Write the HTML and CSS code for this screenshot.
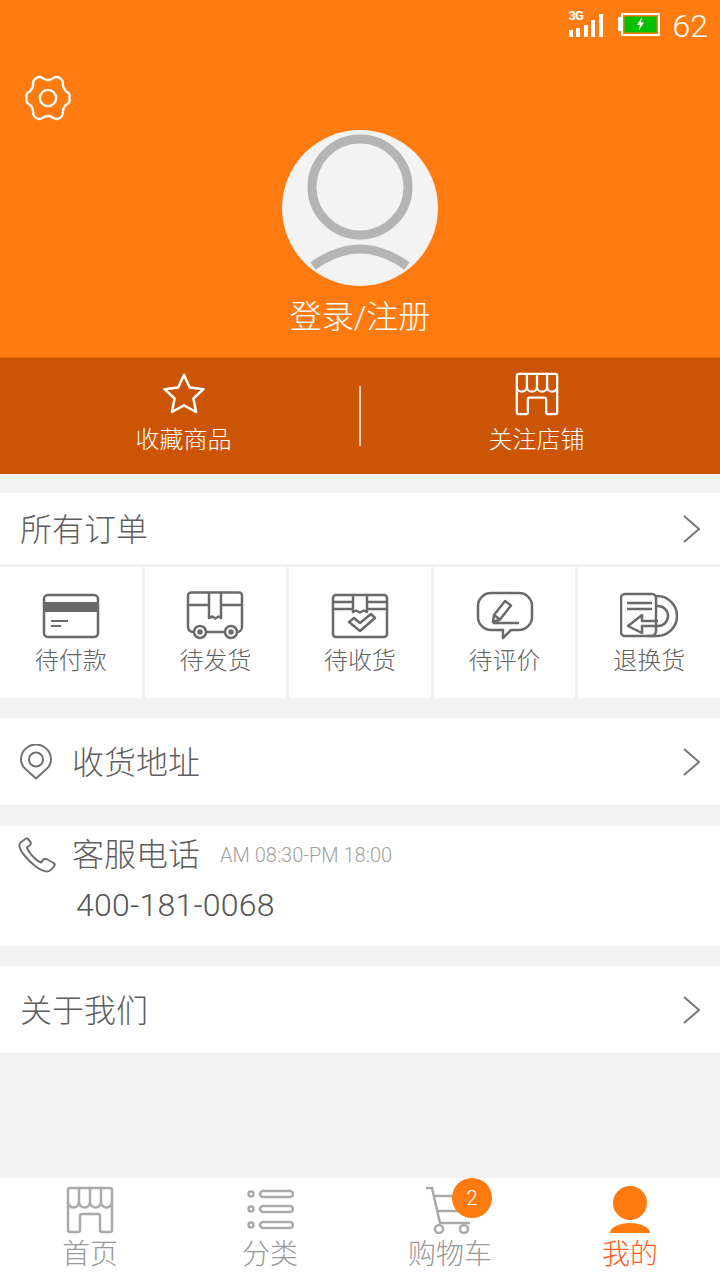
FILE: index.html
```html
<!DOCTYPE html>
<html lang="zh-CN">
<head>
  <meta charset="UTF-8" />
  <meta name="viewport" content="width=device-width, initial-scale=1.0"/>
  <title>我的</title>
  <link rel="stylesheet" href="styles.css">
</head>
<body>
  <svg class="defs" width="0" height="0">
    <symbol id="shop" viewBox="0 0 48 48">
      <path d="M4 2h40a2 2 0 0 1 2 2v40a2 2 0 0 1-2 2H36a2 2 0 0 1-2-2V30a2 2 0 0 0-2-2H16a2 2 0 0 0-2 2v14a2 2 0 0 1-2 2H4a2 2 0 0 1-2-2V4a2 2 0 0 1 2-2z"/>
      <path d="M2 16a5.500 5.500 0 0 0 11 0a5.500 5.500 0 0 0 11 0a5.500 5.500 0 0 0 11 0a5.500 5.500 0 0 0 11 0M13 3v13M24 3v13M35 3v13"/>
    </symbol>
    <symbol id="chevron" viewBox="0 0 18 30">
      <path d="M2 2l15 13L2 28"/>
    </symbol>
  </svg>

  <header class="profile">
    <div class="status">
      <span class="signal">
        <span class="net">3G</span>
        <svg width="36" height="28" viewBox="0 0 36 28"><path d="M2 20v7M9 18v9M17 15v12M24 10v17M32 4v23" stroke="#fff" stroke-width="4"/></svg>
      </span>
      <svg class="battery" width="42" height="26" viewBox="0 0 42 26">
        <rect x="0" y="6" width="4" height="14" rx="1" fill="#fff"/>
        <rect x="4" y="3" width="37" height="21" fill="none" stroke="#fff" stroke-width="2"/>
        <rect x="6.500" y="5.500" width="32" height="16" fill="#00c000"/>
        <path d="M24 6l-5 8h3l-1.500 6 5.500-8.500h-3z" fill="#fff"/>
      </svg>
      <span class="clock">62</span>
    </div>
    <div class="settings">
      <svg class="gear" width="46" height="46" viewBox="0 0 48 48">
        <path d="M18 3Q24 7.500 30 3Q33 1 36 3L38 4.500Q39.500 6 39.500 9Q39.500 15 44.500 18Q46.500 19.500 46.500 21V27Q46.500 28.500 44.500 30Q39.500 33 39.500 39Q39.500 42 38 43.500L36 45Q33 47 30 45Q24 40.500 18 45Q15 47 12 45L10 43.500Q8.500 42 8.500 39Q8.500 33 3.500 30Q1.500 28.500 1.500 27V21Q1.500 19.500 3.500 18Q8.500 15 8.500 9Q8.500 6 10 4.500L12 3Q15 1 18 3Z"/>
        <circle cx="24" cy="24" r="8.500"/>
      </svg>
    </div>
    <div class="avatar">
      <svg width="156" height="156" viewBox="0 0 156 156">
        <circle cx="78" cy="57" r="48" fill="none" stroke="#b4b4b4" stroke-width="9"/>
        <path d="M31 136Q78 102 125 136" fill="none" stroke="#b4b4b4" stroke-width="9"/>
      </svg>
    </div>
    <div class="login">登录/注册</div>
  </header>

  <section class="quick">
    <a class="quick-item">
      <svg width="42" height="42" viewBox="0 0 42 42"><path d="M21 2l5.800 12.500 13.700 1.700-10.100 9.300 2.700 13.500L21 32.300 8.900 39l2.700-13.500L1.500 16.200l13.700-1.700z"/></svg>
      <span>收藏商品</span>
    </a>
    <i class="quick-line"></i>
    <a class="quick-item">
      <svg class="quick-shop" width="44" height="44"><use href="#shop"/></svg>
      <span>关注店铺</span>
    </a>
  </section>

  <main class="content">
    <a class="row row-orders">
      <span class="row-title">所有订单</span>
      <svg class="chevron" width="18" height="30"><use href="#chevron"/></svg>
    </a>

    <div class="orders">
      <a class="order">
        <svg width="58" height="46" viewBox="0 0 58 46">
          <rect x="2" y="2" width="54" height="42" rx="4"/>
          <path d="M2 14h54" stroke-width="10"/>
          <path d="M9 28h17M9 33h10" stroke-width="2"/>
        </svg>
        <span>待付款</span>
      </a>
      <a class="order">
        <svg width="58" height="50" viewBox="0 0 58 50">
          <path d="M8 41H7a5 5 0 0 1-5-5V4.500a3 3 0 0 1 3-3h48a3 3 0 0 1 3 3V36a5 5 0 0 1-5 5h-1M20 41h19M2 14h21M35 14h21"/>
          <path d="M23 1.500V27l3.500-1.500 3 2 3-2L35 27V1.500"/>
          <circle cx="14" cy="41" r="6"/><circle cx="14" cy="41" r="1.500"/>
          <circle cx="45" cy="41" r="6"/><circle cx="45" cy="41" r="1.500"/>
        </svg>
        <span>待发货</span>
      </a>
      <a class="order">
        <svg width="58" height="46" viewBox="0 0 58 46">
          <rect x="2" y="2" width="54" height="42" rx="3"/>
          <path d="M2 9h20M36 9h20M2 16h20M36 16h20"/>
          <path d="M22 2v17l3-1.500 4 2 4-2 3 1.500V2"/>
          <path d="M18 29l5-4 6 5 11-9 4 4-15 13z"/>
        </svg>
        <span>待收货</span>
      </a>
      <a class="order">
        <svg width="58" height="50" viewBox="0 0 58 50">
          <path d="M15 2h28a13 13 0 0 1 13 13v11a13 13 0 0 1-13 13h-8l-8 8v-8H15A13 13 0 0 1 2 26V15A13 13 0 0 1 15 2z"/>
          <path d="M17 31l1-7 11-14 6 4.500-11 14zM18 24l6 4.500M17 32h26"/>
        </svg>
        <span>待评价</span>
      </a>
      <a class="order">
        <svg width="58" height="46" viewBox="0 0 58 46">
          <path d="M34 43H5a4 4 0 0 1-4-4V5a4 4 0 0 1 4-4h27a4 4 0 0 1 4 4v33a5 5 0 0 1-5 5"/>
          <path d="M7 10h25M7 16h25" />
          <path d="M36 3h1a20 20 0 0 1 0 40H28M36 13h2a10 10 0 0 1 0 20H22v7L8 33l14-11v6h16"/>
        </svg>
        <span>退换货</span>
      </a>
    </div>

    <a class="row row-tall">
      <span class="row-main">
        <svg class="row-icon" width="32" height="36" viewBox="0 0 32 36">
          <path d="M16 34.500L6 25.500C2 22 1 18.500 1 15.500a15 15 0 0 1 30 0c0 3-1 6.500-5 10z"/>
          <circle cx="16" cy="15.500" r="7"/>
        </svg>
        <span class="row-title">收货地址</span>
      </span>
      <svg class="chevron" width="18" height="30"><use href="#chevron"/></svg>
    </a>

    <div class="service">
      <div class="service-head">
        <svg class="row-icon" width="38" height="36" viewBox="0 0 38 36">
          <path d="M8 1.500L2.500 5.500C0.500 8 2 13 6.500 18.500c6 7.500 15 15 22 16 3 .5 6-3 8-6 .5-1 0-2-1-2.500l-7-4c-1-.5-2-.5-3 .5l-2.500 3c-3-1-6-3.500-9-7-3-3.500-4.500-6-5-8l3-2.500c1-1 1-2 .5-3L10 2c-.5-1-1.500-1-2-.5z"/>
        </svg>
        <span class="row-title">客服电话</span>
        <span class="hours">AM 08:30-PM 18:00</span>
      </div>
      <div class="phone">400-181-0068</div>
    </div>

    <a class="row row-tall">
      <span class="row-title">关于我们</span>
      <svg class="chevron" width="18" height="30"><use href="#chevron"/></svg>
    </a>
  </main>

  <nav class="tabs">
    <a class="tab">
      <svg class="tab-icon" width="48" height="48"><use href="#shop"/></svg>
      <span>首页</span>
    </a>
    <a class="tab">
      <svg class="tab-icon" width="48" height="48" viewBox="0 0 48 48">
        <circle cx="5" cy="8" r="2.500"/><rect x="14" y="5" width="33" height="6" rx="3"/>
        <circle cx="5" cy="23" r="2.500"/><rect x="14" y="20" width="33" height="6" rx="3"/>
        <circle cx="5" cy="39" r="2.500"/><rect x="14" y="36" width="33" height="6" rx="3"/>
      </svg>
      <span>分类</span>
    </a>
    <a class="tab">
      <span class="cart">
        <svg class="tab-icon" width="48" height="48" viewBox="0 0 48 48">
          <path d="M0 2h6l8 35h30M8 10h36M11 25h30"/>
          <circle cx="13" cy="43" r="4"/><circle cx="38" cy="43" r="4"/>
        </svg>
        <b class="badge">2</b>
      </span>
      <span>购物车</span>
    </a>
    <a class="tab tab-on">
      <svg class="tab-icon" width="48" height="48" viewBox="0 0 48 48">
        <circle cx="24" cy="17" r="17"/>
        <path d="M4 47a20 10 0 0 1 40 0z"/>
      </svg>
      <span>我的</span>
    </a>
  </nav>
</body>
</html>
```

FILE: styles.css
```css
* {
  box-sizing: border-box;
}
body {
  margin: 0;
  min-height: 1280px;
  display: flex;
  flex-direction: column;
  background-color: #f2f2f2;
  color: #616161;
  font-family: Roboto, "Noto Sans CJK SC", sans-serif;
}
.defs {
  position: absolute;
}
symbol path {
  fill: none;
  stroke: currentColor;
  stroke-width: 2.500;
  stroke-linejoin: round;
}
symbol[id="chevron"] path {
  stroke-width: 2;
}

/* orange header */
.profile {
  height: 357px;
  background-color: #ff7b0f;
  color: #fff;
  display: flex;
  flex-direction: column;
  align-items: center;
}
.status {
  align-self: stretch;
  height: 50px;
  padding: 10px 12px 0 0;
  display: flex;
  justify-content: flex-end;
  align-items: flex-start;
  gap: 13px;
}
.signal {
  position: relative;
  width: 36px;
  height: 28px;
  display: block;
}
.net {
  position: absolute;
  left: 0;
  top: -1px;
  font-size: 13px;
  line-height: 14px;
  font-weight: 700;
  letter-spacing: -1px;
}
.battery {
  margin-top: 1px;
}
.clock {
  font-size: 32px;
  line-height: 32px;
  font-weight: 300;
}
.settings {
  align-self: stretch;
  height: 46px;
  margin-top: 25px;
  padding-left: 25px;
}
.gear {
  display: block;
  fill: none;
  stroke: #fff;
  stroke-width: 2.500;
}
.avatar {
  width: 156px;
  height: 156px;
  margin-top: 9px;
  border-radius: 50%;
  background-color: #f3f3f3;
  overflow: hidden;
}
.avatar svg {
  display: block;
}
.login {
  margin-top: 9px;
  font-size: 32px;
  line-height: 44px;
  font-weight: 300;
}

/* dark strip */
.quick {
  height: 117px;
  padding: 0 8px;
  border-top: 1px solid #e0690a;
  background-color: #cb5504;
  color: #fff;
  display: flex;
  align-items: center;
}
.quick-item {
  flex: 1;
  display: flex;
  flex-direction: column;
  align-items: center;
  gap: 8px;
  margin-top: -2px;
}
.quick-item svg {
  display: block;
  fill: none;
  stroke: #fff;
  stroke-width: 2.500;
  stroke-linejoin: round;
}
.quick-item .quick-shop {
  margin: -1px 0;
  stroke: none;
}
.quick-item span {
  font-size: 24px;
  line-height: 34px;
  font-weight: 300;
}
.quick-line {
  width: 2px;
  height: 60px;
  background-color: #f6d3b5;
}

/* list */
.content {
  flex: 1;
  padding-top: 19px;
}
.row {
  display: flex;
  justify-content: space-between;
  align-items: center;
  background-color: #fff;
  padding: 0 20px;
}
.row-orders {
  height: 71px;
}
.row-tall {
  height: 87px;
  margin-top: 20px;
}
.row-main {
  display: flex;
  align-items: center;
  gap: 20px;
}
.row-title {
  font-size: 32px;
  line-height: 44px;
  font-weight: 300;
  color: #5e5e5e;
}
.row > .row-title,
.row-main > .row-title {
  margin-top: 2px;
}
.row-icon {
  display: block;
  fill: none;
  stroke: #707070;
  stroke-width: 2;
  stroke-linejoin: round;
}
.chevron {
  display: block;
  stroke: #777;
  fill: none;
  color: #777;
}
.orders {
  margin-top: 3px;
  display: grid;
  grid-template-columns: repeat(5, 1fr);
  gap: 3px;
}
.order {
  height: 131px;
  padding-top: 24px;
  background-color: #fff;
  display: flex;
  flex-direction: column;
  align-items: center;
}
.order svg {
  display: block;
  height: 50px;
  fill: none;
  stroke: #6a6a6a;
  stroke-width: 2.500;
  stroke-linejoin: round;
}
.order span {
  margin-top: 1px;
  font-size: 24px;
  line-height: 38px;
  font-weight: 300;
}
.service {
  height: 120px;
  margin-top: 21px;
  background-color: #fff;
  padding: 7px 0 0 18px;
}
.service-head {
  display: flex;
  align-items: center;
  gap: 16px;
}
.hours {
  margin-left: 4px;
  font-size: 20px;
  font-weight: 300;
  color: #a0a0a0;
}
.phone {
  margin: 6px 0 0 58px;
  font-size: 32px;
  line-height: 44px;
  font-weight: 300;
  letter-spacing: 0.25px;
  color: #555;
}

/* bottom tabs */
.tabs {
  height: 102px;
  background-color: #fff;
  display: grid;
  grid-template-columns: repeat(4, 1fr);
}
.tab {
  padding-top: 8px;
  display: flex;
  flex-direction: column;
  align-items: center;
  color: #999;
  font-size: 28px;
  line-height: 42px;
  font-weight: 300;
}
.tab-icon {
  display: block;
  fill: none;
  stroke: #aaa;
  stroke-width: 2.500;
  color: #aaa;
}
.cart {
  position: relative;
  display: block;
}
.badge {
  position: absolute;
  left: 26px;
  top: -8px;
  width: 40px;
  height: 40px;
  border-radius: 50%;
  background-color: #ff7b0f;
  color: #fff;
  font-size: 20px;
  line-height: 40px;
  font-weight: 300;
  text-align: center;
}
.tab-on {
  color: #ff5a1f;
}
.tab-on .tab-icon {
  fill: #ff7b0f;
  stroke: none;
}
```
